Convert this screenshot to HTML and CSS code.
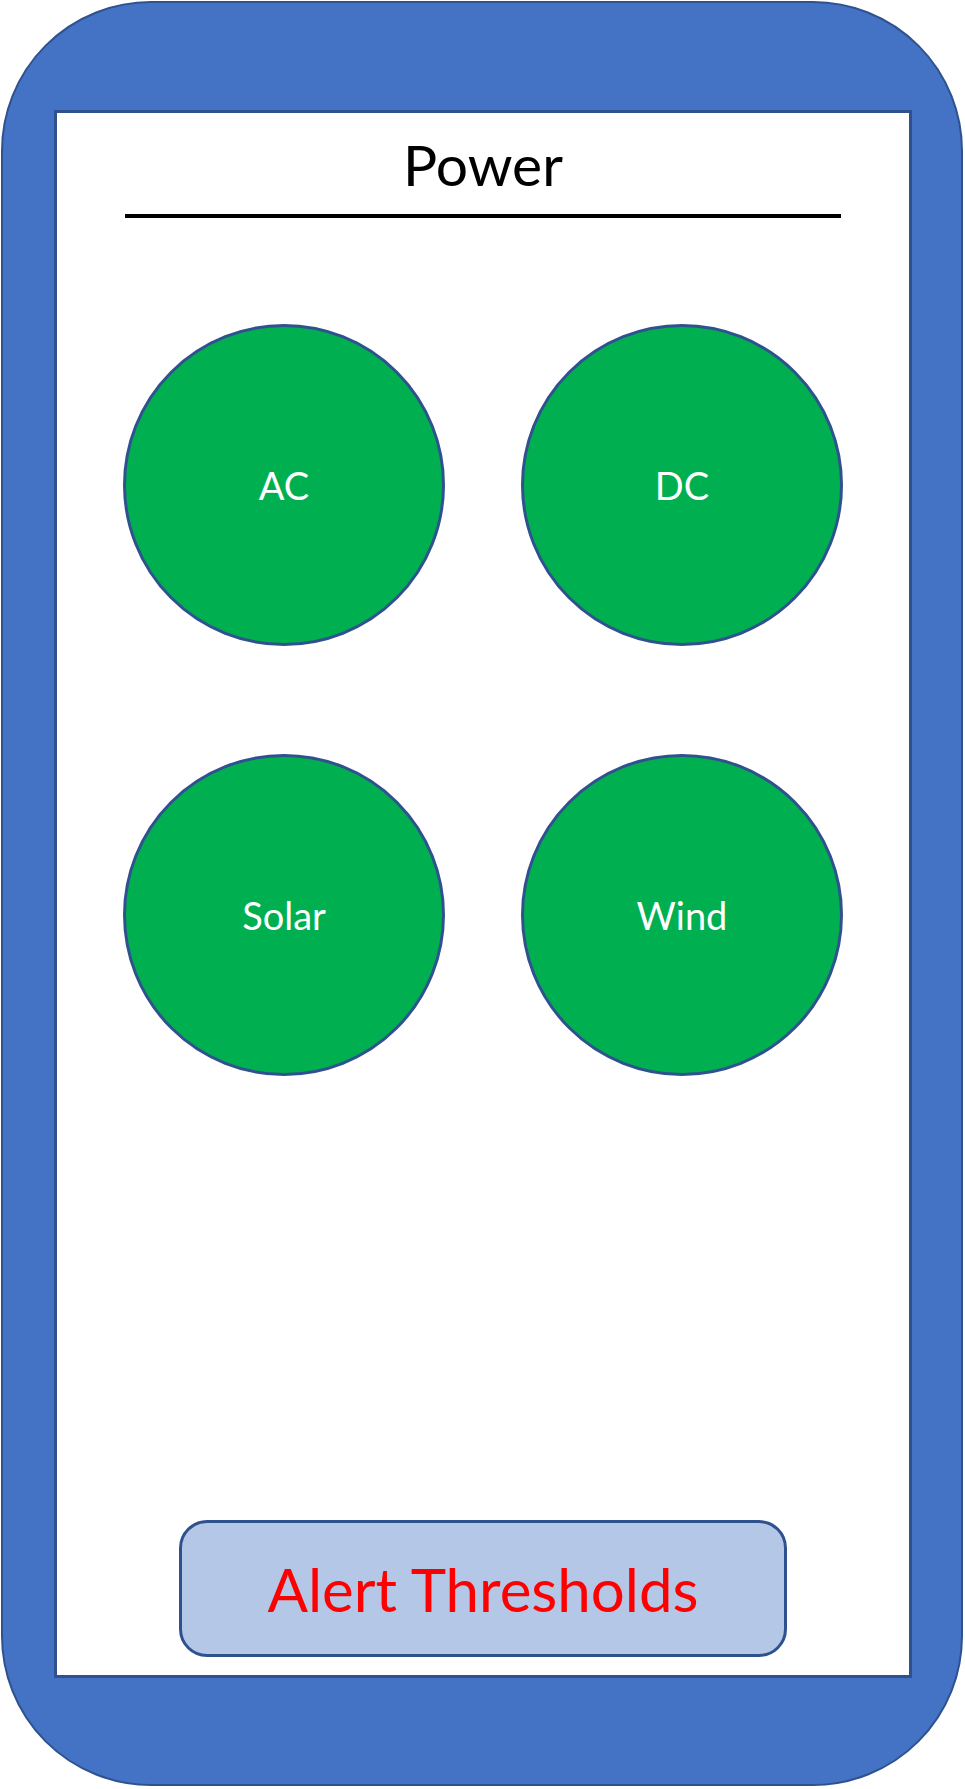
FILE: index.html
```html
<!DOCTYPE html>
<html lang="en">
<head>
<meta charset="utf-8">
<title>Power</title>
<link rel="stylesheet" href="styles.css">
</head>
<body>
  <div class="phone">
    <div class="screen">
      <div class="title">Power</div>
      <div class="rule"></div>
      <div class="grid">
        <div class="circle">AC</div>
        <div class="circle">DC</div>
        <div class="circle">Solar</div>
        <div class="circle">Wind</div>
      </div>
      <div class="button">Alert Thresholds</div>
    </div>
  </div>
</body>
</html>
```
FILE: styles.css
```css
html, body {
  margin: 0;
  padding: 0;
  background: #ffffff;
}
body {
  font-family: "Lato", "Open Sans", sans-serif;
}
.phone {
  box-sizing: border-box;
  margin: 1px 0 0 1px;
  width: 962px;
  height: 1785px;
  background: #4472C4;
  border: 2px solid #2F528F;
  border-radius: 150px;
  padding: 107px 0 0 51px;
}
.screen {
  box-sizing: border-box;
  width: 858px;
  height: 1568px;
  background: #ffffff;
  border: 3px solid #2F528F;
  display: flex;
  flex-direction: column;
  align-items: center;
}
.title {
  height: 101px;
  display: flex;
  align-items: center;
  justify-content: center;
  font-size: 57px;
  color: #000000;
}
.rule {
  width: 716px;
  height: 4px;
  background: #000000;
}
.grid {
  margin-top: 106px;
  display: grid;
  grid-template-columns: 322px 322px;
  grid-auto-rows: 322px;
  column-gap: 76px;
  row-gap: 108px;
}
.circle {
  box-sizing: border-box;
  border-radius: 50%;
  background: #00B050;
  border: 3px solid #2F528F;
  display: flex;
  align-items: center;
  justify-content: center;
  color: #ffffff;
  font-size: 38px;
}
.button {
  box-sizing: border-box;
  margin-top: auto;
  margin-bottom: 18px;
  width: 608px;
  height: 137px;
  background: #B4C7E7;
  border: 3px solid #2F528F;
  border-radius: 28px;
  display: flex;
  align-items: center;
  justify-content: center;
  color: #FF0000;
  font-size: 60px;
}
```
